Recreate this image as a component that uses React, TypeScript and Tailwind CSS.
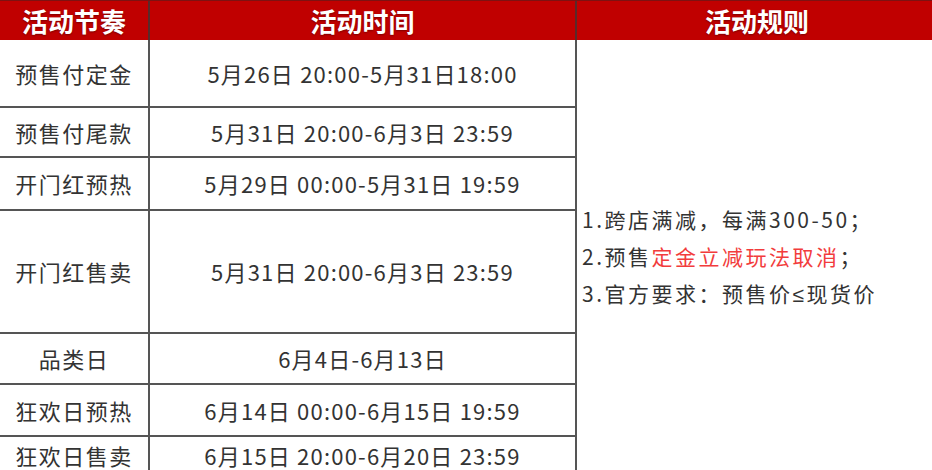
const rows: { stage: string; time: string; h: string }[] = [
  { stage: "预售付定金", time: "5月26日 20:00-5月31日18:00", h: "h-[68px]" },
  { stage: "预售付尾款", time: "5月31日 20:00-6月3日 23:59", h: "h-[50px]" },
  { stage: "开门红预热", time: "5月29日 00:00-5月31日 19:59", h: "h-[53px]" },
  { stage: "开门红售卖", time: "5月31日 20:00-6月3日 23:59", h: "h-[123px]" },
  { stage: "品类日", time: "6月4日-6月13日", h: "h-[51px]" },
  { stage: "狂欢日预热", time: "6月14日 00:00-6月15日 19:59", h: "h-[52px]" },
  { stage: "狂欢日售卖", time: "6月15日 20:00-6月20日 23:59", h: "h-[36px]" },
];

const headCell =
  "flex items-center justify-center text-[26px] font-bold text-white [text-shadow:0_1px_2px_rgba(0,0,0,0.35)]";

export default function App() {
  return (
    <div className="h-[470px] w-[932px] overflow-hidden bg-white font-['Noto_Sans_CJK_SC','Noto_Sans',sans-serif]">
      <div className="w-[937px]">
        <div className="flex h-[40px] border-t border-[#7d1212] bg-[#c00000]">
          <div className={`${headCell} w-[150px] border-r-2 border-[#5a2a2a]`}>活动节奏</div>
          <div className={`${headCell} w-[427px] border-r-2 border-[#5a2a2a]`}>活动时间</div>
          <div className={`${headCell} flex-1`}>活动规则</div>
        </div>
        <div className="flex">
          <div className="w-[577px]">
            {rows.map((r, i) => (
              <div
                key={r.stage}
                className={`flex ${r.h} ${i < rows.length - 1 ? "border-b-2" : ""} border-[#555]`}
              >
                <div className="flex w-[150px] items-center justify-center border-r-2 border-[#555] text-[22px] tracking-[1.5px] text-[#333]">
                  {r.stage}
                </div>
                <div className="flex flex-1 items-center justify-center border-r-2 border-[#555] text-[22px] tracking-[1.2px] text-[#333]">
                  {r.time}
                </div>
              </div>
            ))}
          </div>
          <div className="flex flex-1 items-center pl-[5px] text-[21px] leading-[37px] tracking-[2.5px] text-[#333]">
            <div>
              <p>1.跨店满减，每满300-50；</p>
              <p>
                2.预售<span className="text-[#f23c3c]">定金立减玩法取消</span>；
              </p>
              <p>
                3.官方要求：预售价<span className="font-['Noto_Sans',sans-serif]">≤</span>现货价
              </p>
            </div>
          </div>
        </div>
      </div>
    </div>
  );
}
